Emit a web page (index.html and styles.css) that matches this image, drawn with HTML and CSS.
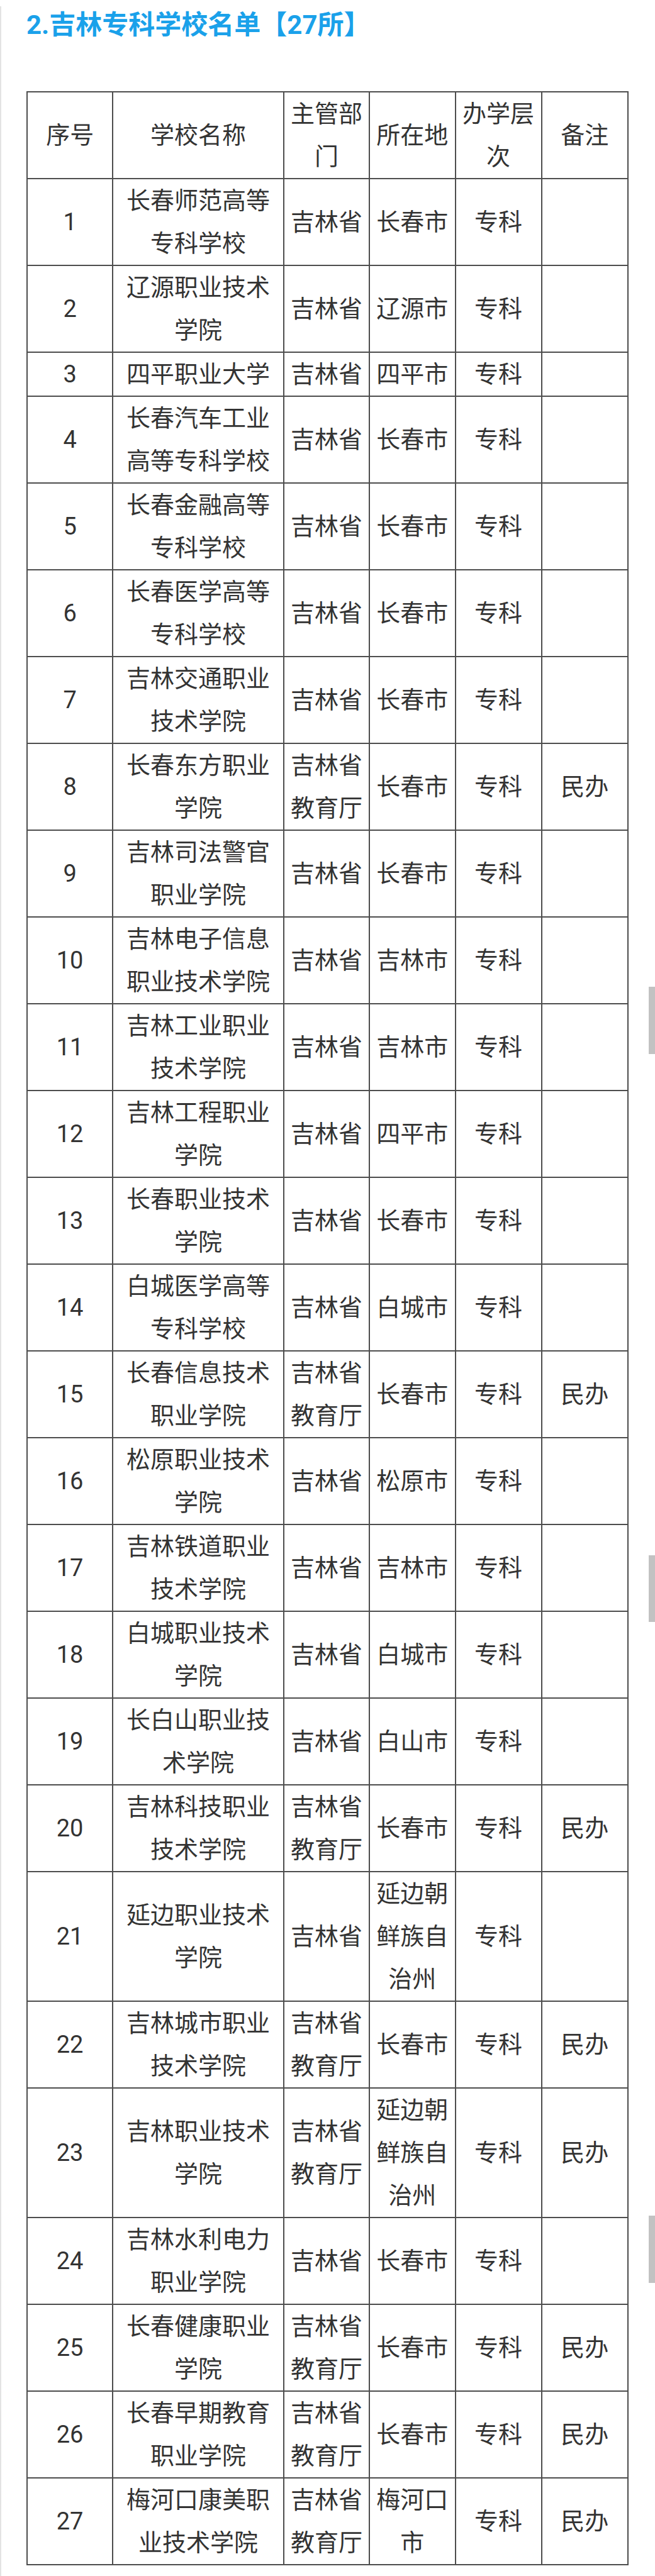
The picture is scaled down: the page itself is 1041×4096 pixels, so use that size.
FILE: index.html
```html
<!DOCTYPE html>
<html lang="zh-CN">
<head>
<meta charset="utf-8">
<title>吉林专科学校名单</title>
<link rel="stylesheet" href="styles.css">
</head>
<body>
<div class="page">
  <h2 class="title">2.吉林专科学校名单【27所】</h2>
  <table class="list">
    <colgroup>
      <col class="c-no"><col class="c-name"><col class="c-dept"><col class="c-loc"><col class="c-lvl"><col class="c-note">
    </colgroup>
    <thead>
      <tr><th>序号</th><th>学校名称</th><th>主管部门</th><th>所在地</th><th>办学层次</th><th>备注</th></tr>
    </thead>
    <tbody>
      <tr><td class="num">1</td><td>长春师范高等专科学校</td><td>吉林省</td><td>长春市</td><td>专科</td><td></td></tr>
      <tr><td class="num">2</td><td>辽源职业技术学院</td><td>吉林省</td><td>辽源市</td><td>专科</td><td></td></tr>
      <tr><td class="num">3</td><td>四平职业大学</td><td>吉林省</td><td>四平市</td><td>专科</td><td></td></tr>
      <tr><td class="num">4</td><td>长春汽车工业高等专科学校</td><td>吉林省</td><td>长春市</td><td>专科</td><td></td></tr>
      <tr><td class="num">5</td><td>长春金融高等专科学校</td><td>吉林省</td><td>长春市</td><td>专科</td><td></td></tr>
      <tr><td class="num">6</td><td>长春医学高等专科学校</td><td>吉林省</td><td>长春市</td><td>专科</td><td></td></tr>
      <tr><td class="num">7</td><td>吉林交通职业技术学院</td><td>吉林省</td><td>长春市</td><td>专科</td><td></td></tr>
      <tr><td class="num">8</td><td>长春东方职业学院</td><td>吉林省教育厅</td><td>长春市</td><td>专科</td><td>民办</td></tr>
      <tr><td class="num">9</td><td>吉林司法警官职业学院</td><td>吉林省</td><td>长春市</td><td>专科</td><td></td></tr>
      <tr><td class="num">10</td><td>吉林电子信息职业技术学院</td><td>吉林省</td><td>吉林市</td><td>专科</td><td></td></tr>
      <tr><td class="num">11</td><td>吉林工业职业技术学院</td><td>吉林省</td><td>吉林市</td><td>专科</td><td></td></tr>
      <tr><td class="num">12</td><td>吉林工程职业学院</td><td>吉林省</td><td>四平市</td><td>专科</td><td></td></tr>
      <tr><td class="num">13</td><td>长春职业技术学院</td><td>吉林省</td><td>长春市</td><td>专科</td><td></td></tr>
      <tr><td class="num">14</td><td>白城医学高等专科学校</td><td>吉林省</td><td>白城市</td><td>专科</td><td></td></tr>
      <tr><td class="num">15</td><td>长春信息技术职业学院</td><td>吉林省教育厅</td><td>长春市</td><td>专科</td><td>民办</td></tr>
      <tr><td class="num">16</td><td>松原职业技术学院</td><td>吉林省</td><td>松原市</td><td>专科</td><td></td></tr>
      <tr><td class="num">17</td><td>吉林铁道职业技术学院</td><td>吉林省</td><td>吉林市</td><td>专科</td><td></td></tr>
      <tr><td class="num">18</td><td>白城职业技术学院</td><td>吉林省</td><td>白城市</td><td>专科</td><td></td></tr>
      <tr><td class="num">19</td><td>长白山职业技术学院</td><td>吉林省</td><td>白山市</td><td>专科</td><td></td></tr>
      <tr><td class="num">20</td><td>吉林科技职业技术学院</td><td>吉林省教育厅</td><td>长春市</td><td>专科</td><td>民办</td></tr>
      <tr><td class="num">21</td><td>延边职业技术学院</td><td>吉林省</td><td>延边朝鲜族自治州</td><td>专科</td><td></td></tr>
      <tr><td class="num">22</td><td>吉林城市职业技术学院</td><td>吉林省教育厅</td><td>长春市</td><td>专科</td><td>民办</td></tr>
      <tr><td class="num">23</td><td>吉林职业技术学院</td><td>吉林省教育厅</td><td>延边朝鲜族自治州</td><td>专科</td><td>民办</td></tr>
      <tr><td class="num">24</td><td>吉林水利电力职业学院</td><td>吉林省</td><td>长春市</td><td>专科</td><td></td></tr>
      <tr><td class="num">25</td><td>长春健康职业学院</td><td>吉林省教育厅</td><td>长春市</td><td>专科</td><td>民办</td></tr>
      <tr><td class="num">26</td><td>长春早期教育职业学院</td><td>吉林省教育厅</td><td>长春市</td><td>专科</td><td>民办</td></tr>
      <tr><td class="num">27</td><td>梅河口康美职业技术学院</td><td>吉林省教育厅</td><td>梅河口市</td><td>专科</td><td>民办</td></tr>
    </tbody>
  </table>
  <div class="scroll-mark mark-1"></div>
  <div class="scroll-mark mark-2"></div>
  <div class="scroll-mark mark-3"></div>
</div>
</body>
</html>
```

FILE: styles.css
```css
html, body {
  margin: 0;
  padding: 0;
  background: #ffffff;
}

.page {
  position: relative;
  min-height: 4096px;
  box-sizing: border-box;
  border-left: 2px solid #e3e3e3;
  padding: 0 0 0 40px;
  font-family: Roboto, "Noto Sans CJK SC", sans-serif;
  color: #333333;
}

.title {
  margin: 10px 0 75px 0;
  font-size: 42px;
  line-height: 60px;
  font-weight: 700;
  color: #1aa1ea;
  letter-spacing: 0;
}

.list {
  width: 957px;
  border-collapse: collapse;
  table-layout: fixed;
  border: 2px solid #4d4d4d;
}

.c-no { width: 14.27%; }
.c-name { width: 28.45%; }
.c-dept { width: 14.27%; }
.c-loc { width: 14.27%; }
.c-lvl { width: 14.37%; }
.c-note { width: 14.37%; }

.list th,
.list td {
  border: 2px solid #4d4d4d;
  padding: 0 6px;
  font-size: 38px;
  line-height: 68px;
  font-weight: 400;
  text-align: center;
  vertical-align: middle;
  color: #333333;
}

.list .num {
  font-family: Roboto, "Noto Sans CJK SC", sans-serif;
}

.scroll-mark {
  position: absolute;
  right: 0;
  width: 10px;
  background: #c2c2c2;
}

.mark-1 { top: 1559px; height: 107px; }
.mark-2 { top: 2463px; height: 106px; }
.mark-3 { top: 3513px; height: 107px; }
```
